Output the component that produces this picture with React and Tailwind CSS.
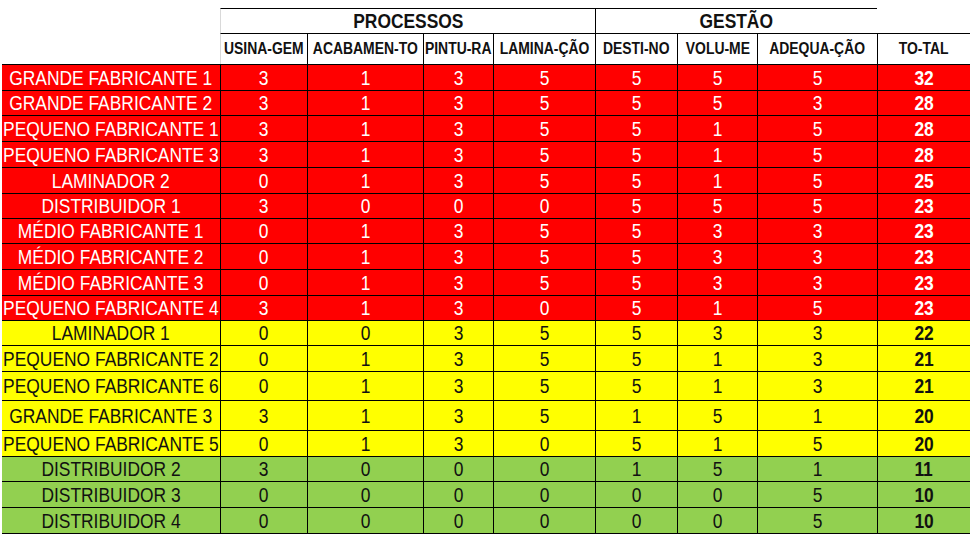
import React from 'react';

const RED = 'bg-[#ff0000] text-white';
const YELLOW = 'bg-[#ffff00] text-[#111]';
const GREEN = 'bg-[#92d050] text-[#111]';

const rows = [
  { name: 'GRANDE FABRICANTE 1', vals: [3, 1, 3, 5, 5, 5, 5], total: 32, tone: RED, h: 'h-[26px]' },
  { name: 'GRANDE FABRICANTE 2', vals: [3, 1, 3, 5, 5, 5, 3], total: 28, tone: RED, h: 'h-[25px]' },
  { name: 'PEQUENO FABRICANTE 1', vals: [3, 1, 3, 5, 5, 1, 5], total: 28, tone: RED, h: 'h-[26px]' },
  { name: 'PEQUENO FABRICANTE 3', vals: [3, 1, 3, 5, 5, 1, 5], total: 28, tone: RED, h: 'h-[26px]' },
  { name: 'LAMINADOR 2', vals: [0, 1, 3, 5, 5, 1, 5], total: 25, tone: RED, h: 'h-[26px]' },
  { name: 'DISTRIBUIDOR 1', vals: [3, 0, 0, 0, 5, 5, 5], total: 23, tone: RED, h: 'h-[25px]' },
  { name: 'MÉDIO FABRICANTE 1', vals: [0, 1, 3, 5, 5, 3, 3], total: 23, tone: RED, h: 'h-[25px]' },
  { name: 'MÉDIO FABRICANTE 2', vals: [0, 1, 3, 5, 5, 3, 3], total: 23, tone: RED, h: 'h-[26px]' },
  { name: 'MÉDIO FABRICANTE 3', vals: [0, 1, 3, 5, 5, 3, 3], total: 23, tone: RED, h: 'h-[26px]' },
  { name: 'PEQUENO FABRICANTE 4', vals: [3, 1, 3, 0, 5, 1, 5], total: 23, tone: RED, h: 'h-[25px]' },
  { name: 'LAMINADOR 1', vals: [0, 0, 3, 5, 5, 3, 3], total: 22, tone: YELLOW, h: 'h-[25px]' },
  { name: 'PEQUENO FABRICANTE 2', vals: [0, 1, 3, 5, 5, 1, 3], total: 21, tone: YELLOW, h: 'h-[26px]' },
  { name: 'PEQUENO FABRICANTE 6', vals: [0, 1, 3, 5, 5, 1, 3], total: 21, tone: YELLOW, h: 'h-[29px]' },
  { name: 'GRANDE FABRICANTE 3', vals: [3, 1, 3, 5, 1, 5, 1], total: 20, tone: YELLOW, h: 'h-[30px]' },
  { name: 'PEQUENO FABRICANTE 5', vals: [0, 1, 3, 0, 5, 1, 5], total: 20, tone: YELLOW, h: 'h-[26px]' },
  { name: 'DISTRIBUIDOR 2', vals: [3, 0, 0, 0, 1, 5, 1], total: 11, tone: GREEN, h: 'h-[25px]' },
  { name: 'DISTRIBUIDOR 3', vals: [0, 0, 0, 0, 0, 0, 5], total: 10, tone: GREEN, h: 'h-[26px]' },
  { name: 'DISTRIBUIDOR 4', vals: [0, 0, 0, 0, 0, 0, 5], total: 10, tone: GREEN, h: 'h-[26px]' },
];

const columns = ['USINA-GEM', 'ACABAMEN-TO', 'PINTU-RA', 'LAMINA-ÇÃO', 'DESTI-NO', 'VOLU-ME', 'ADEQUA-ÇÃO', 'TO-TAL'];

// excel look: glyphs are a bit squeezed sideways
const Txt = ({ children, className = '' }) => (
  <span className={`inline-block scale-x-87 leading-none whitespace-nowrap ${className}`}>{children}</span>
);

const Cell = ({ className = '', children }) => (
  <div className={`flex items-center justify-center ${className}`}>{children}</div>
);

export default function App() {
  return (
    <div className="w-[976px] h-[537px] bg-white overflow-hidden font-['Liberation_Sans',Arial,sans-serif] pt-[8px] pl-[2px]">
      <div className="grid grid-cols-[218px_87px_116px_70px_102px_82px_80px_120px_93px] w-[968px] border-b border-black">
        {/* group header */}
        <div className="h-[25px]" />
        <Cell className="col-span-4 h-[25px] border-t border-l border-t-black border-l-[#d9d9d9] text-[20px] font-bold text-[#111]">
          <Txt>PROCESSOS</Txt>
        </Cell>
        <Cell className="col-span-3 h-[25px] border-t border-l border-black text-[20px] font-bold text-[#111]">
          <Txt>GESTÃO</Txt>
        </Cell>
        <div className="h-[25px]" />

        {/* column header */}
        <div className="h-[31px]" />
        {columns.map((c, i) => (
          <Cell
            key={c}
            className={`h-[31px] border-t border-l border-t-black text-[16px] font-bold text-[#111] ${i === 0 ? 'border-l-[#d9d9d9]' : 'border-l-black'}`}
          >
            <Txt>{c}</Txt>
          </Cell>
        ))}

        {rows.map((r) => (
          <React.Fragment key={r.name}>
            <Cell className={`${r.h} ${r.tone} border-t border-black text-[20px]`}>
              <Txt>{r.name}</Txt>
            </Cell>
            {r.vals.map((v, i) => (
              <Cell key={i} className={`${r.h} ${r.tone} border-t border-l border-black text-[20px]`}>
                <Txt>{v}</Txt>
              </Cell>
            ))}
            <Cell className={`${r.h} ${r.tone} border-t border-l border-black text-[20px] font-bold`}>
              <Txt>{r.total}</Txt>
            </Cell>
          </React.Fragment>
        ))}
      </div>
    </div>
  );
}
